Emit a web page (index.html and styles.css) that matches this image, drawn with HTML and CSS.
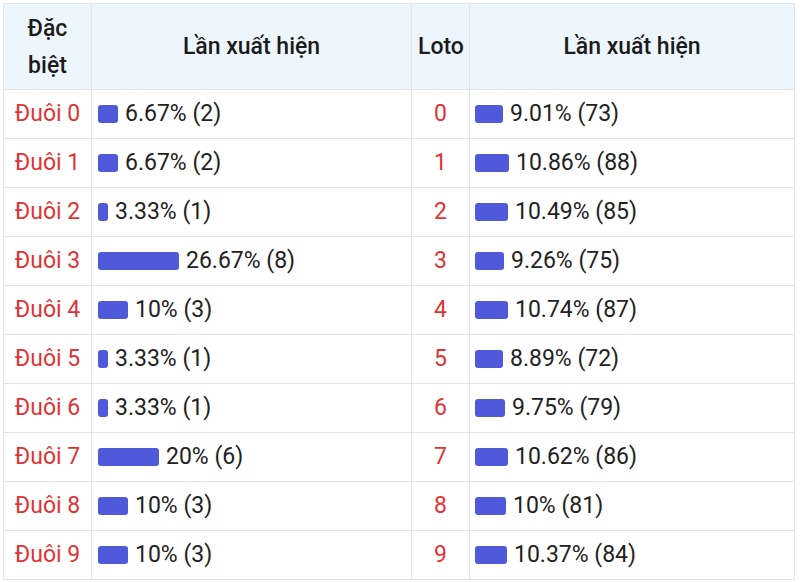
FILE: index.html
```html
<!DOCTYPE html>
<html lang="vi">
<head>
<meta charset="utf-8">
<link rel="stylesheet" href="styles.css">
</head>
<body>
<table class="stats">
  <colgroup>
    <col class="c1"><col class="c2"><col class="c3"><col class="c4">
  </colgroup>
  <thead>
    <tr><th>Đặc<br>biệt</th><th>Lần xuất hiện</th><th>Loto</th><th>Lần xuất hiện</th></tr>
  </thead>
  <tbody>
    <tr><td class="num">Đuôi 0</td><td><span class="bar" style="width:20px"></span>6.67% (2)</td><td class="num">0</td><td class="loto"><span class="bar" style="width:28px"></span>9.01% (73)</td></tr>
    <tr><td class="num">Đuôi 1</td><td><span class="bar" style="width:20px"></span>6.67% (2)</td><td class="num">1</td><td class="loto"><span class="bar" style="width:34px"></span>10.86% (88)</td></tr>
    <tr><td class="num">Đuôi 2</td><td><span class="bar" style="width:10px"></span>3.33% (1)</td><td class="num">2</td><td class="loto"><span class="bar" style="width:33px"></span>10.49% (85)</td></tr>
    <tr><td class="num">Đuôi 3</td><td><span class="bar" style="width:81px"></span>26.67% (8)</td><td class="num">3</td><td class="loto"><span class="bar" style="width:29px"></span>9.26% (75)</td></tr>
    <tr><td class="num">Đuôi 4</td><td><span class="bar" style="width:30px"></span>10% (3)</td><td class="num">4</td><td class="loto"><span class="bar" style="width:33px"></span>10.74% (87)</td></tr>
    <tr><td class="num">Đuôi 5</td><td><span class="bar" style="width:10px"></span>3.33% (1)</td><td class="num">5</td><td class="loto"><span class="bar" style="width:28px"></span>8.89% (72)</td></tr>
    <tr><td class="num">Đuôi 6</td><td><span class="bar" style="width:10px"></span>3.33% (1)</td><td class="num">6</td><td class="loto"><span class="bar" style="width:30px"></span>9.75% (79)</td></tr>
    <tr><td class="num">Đuôi 7</td><td><span class="bar" style="width:61px"></span>20% (6)</td><td class="num">7</td><td class="loto"><span class="bar" style="width:33px"></span>10.62% (86)</td></tr>
    <tr><td class="num">Đuôi 8</td><td><span class="bar" style="width:30px"></span>10% (3)</td><td class="num">8</td><td class="loto"><span class="bar" style="width:31px"></span>10% (81)</td></tr>
    <tr><td class="num">Đuôi 9</td><td><span class="bar" style="width:30px"></span>10% (3)</td><td class="num">9</td><td class="loto"><span class="bar" style="width:32px"></span>10.37% (84)</td></tr>
  </tbody>
</table>
</body>
</html>
```
FILE: styles.css
```css
html, body {
  margin: 0;
  padding: 0;
  background: #fff;
}
body {
  padding: 3px 0 0 3px;
  font-family: Roboto, "Noto Sans", sans-serif;
  color: #222;
}
.stats {
  border-collapse: collapse;
  table-layout: fixed;
  width: 791px;
  font-size: 23px;
}
.c1 { width: 88px; }
.c2 { width: 320px; }
.c3 { width: 58px; }
.c4 { width: 325px; }
.stats th, .stats td {
  border: 1px solid #e2e4e7;
  padding: 0 6px;
}
.stats th {
  background: #eef6fd;
  font-weight: 500;
  height: 85px;
  line-height: 37px;
  text-align: center;
  color: #1b1b1b;
}
.stats td {
  height: 48px;
  line-height: 26px;
  white-space: nowrap;
}
.stats td.loto {
  padding-left: 5px;
}
.stats td.num {
  text-align: center;
  color: #e03434;
  padding: 0;
}
.bar {
  display: inline-block;
  height: 18px;
  background: #5059d9;
  border-radius: 3px;
  vertical-align: -2px;
  margin-right: 7px;
}
```
